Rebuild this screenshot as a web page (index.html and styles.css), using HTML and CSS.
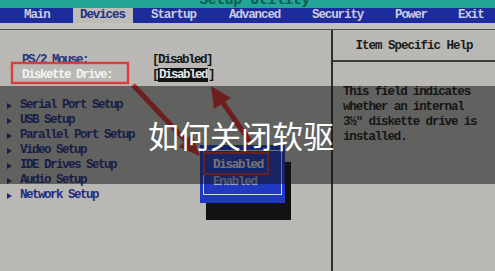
FILE: index.html
```html
<!DOCTYPE html>
<html lang="zh-CN">
<head>
<meta charset="utf-8">
<title>如何关闭软驱</title>
<link rel="stylesheet" href="styles.css">
</head>
<body>
<div class="screen">
  <div class="title"><span>Setup Utility</span></div>
  <nav class="menubar">
    <span class="m first">Main</span>
    <span class="m tab">Devices</span>
    <span class="m">Startup</span>
    <span class="m">Advanced</span>
    <span class="m">Security</span>
    <span class="m">Power</span>
    <span class="m">Exit</span>
  </nav>
  <div class="strip"></div>
  <main class="frame">
    <section class="left">
      <div class="row"><span class="lbl">PS/2 Mouse:</span><span class="val">[Disabled]</span></div>
      <div class="row"><span class="lbl sel">Diskette Drive:</span><span class="val">[<b class="hl">Disabled</b>]</span></div>
      <div class="blank"></div>
      <ul class="subs">
        <li><i class="tri"></i>Serial Port Setup</li>
        <li><i class="tri"></i>USB Setup</li>
        <li><i class="tri"></i>Parallel Port Setup</li>
        <li><i class="tri"></i>Video Setup</li>
        <li><i class="tri"></i>IDE Drives Setup</li>
        <li><i class="tri"></i>Audio Setup</li>
        <li><i class="tri"></i>Network Setup</li>
      </ul>
    </section>
    <aside class="help">
      <h2>Item Specific Help</h2>
      <p>This field indicates<br>whether an internal<br>3½" diskette drive is<br>installed.</p>
    </aside>
  </main>
</div>
<div class="popup">
  <div class="popup-inner">
    <div class="opt chosen">Disabled</div>
    <div class="opt">Enabled</div>
  </div>
</div>
<svg class="marks" width="495" height="271" viewBox="0 0 495 271">
  <rect x="12" y="63" width="116" height="20" fill="none" stroke="#de3c3a" stroke-width="2.4"/>
  <line x1="133" y1="85" x2="188" y2="143" stroke="#d02e2c" stroke-width="5"/>
  <polygon points="200,156 179,147 192,134" fill="#d02e2c"/>
  <line x1="251" y1="143" x2="221" y2="100" stroke="#d02e2c" stroke-width="5"/>
  <polygon points="211,86 214,109 231,98" fill="#d02e2c"/>
</svg>
<div class="band"></div>
<div class="caption">如何关闭软驱</div>
</body>
</html>
```
FILE: styles.css
```css
html, body {
  margin: 0;
  padding: 0;
}
body {
  width: 495px;
  height: 271px;
  overflow: hidden;
  position: relative;
  background: #b9b8b4;
  font-family: "Liberation Mono", "DejaVu Sans Mono", monospace;
  font-weight: bold;
}
.screen {
  display: flex;
  flex-direction: column;
  height: 271px;
}
.title {
  height: 8px;
  overflow: hidden;
  background: #22a596;
  text-align: center;
  padding-left: 14px;
}
.title span {
  display: block;
  margin-top: -7px;
  font-size: 15px;
  line-height: 15px;
  color: #0b5e50;
  letter-spacing: -0.5px;
}
.menubar {
  display: grid;
  grid-template-columns: 73px 60px 78px 83px 83px 63px 1fr;
  height: 15px;
  background: #1c2c9c;
  font-size: 12.5px;
  line-height: 15px;
  letter-spacing: -1.1px;
  color: #c9cde2;
}
.m {
  padding-left: 18px;
  white-space: nowrap;
}
.m.first {
  padding-left: 24px;
}
.m.tab {
  padding-left: 7px;
  background: #bcbbb8;
  color: #24307e;
}
.strip {
  height: 6px;
  background: #c2c1bd;
  border-bottom: 1px solid #4e4e4c;
}
.frame {
  flex: 1;
  display: grid;
  grid-template-columns: 333px 1fr;
  font-size: 12.5px;
  line-height: 15px;
  letter-spacing: -1.5px;
}
.left {
  border-right: 2px solid #2e2e2e;
  padding-top: 23px;
}
.row {
  display: flex;
  height: 15px;
  padding-left: 22px;
}
.lbl {
  width: 130px;
  color: #27337c;
}
.lbl.sel {
  color: #f4f4f2;
}
.val {
  color: #161616;
}
.hl {
  background: #121212;
  color: #e6e6e6;
  padding: 0 1px;
}
.blank {
  height: 15px;
}
.subs {
  list-style: none;
  margin: 0;
  padding: 0 0 0 7px;
  color: #1f2b80;
}
.subs li {
  display: flex;
  align-items: center;
  height: 15px;
}
.tri {
  width: 0;
  height: 0;
  border-left: 5px solid #1f2b80;
  border-top: 3.5px solid transparent;
  border-bottom: 3.5px solid transparent;
  margin-right: 8px;
}
.help h2 {
  margin: 0;
  height: 30px;
  line-height: 32px;
  font-size: 12.5px;
  letter-spacing: -1px;
  text-align: center;
  color: #1a1a1a;
  border-bottom: 2px solid #3c3c3a;
}
.help p {
  margin: 23px 0 0;
  padding-left: 10px;
  color: #1c1c1c;
  letter-spacing: -1.15px;
  white-space: nowrap;
}
.popup {
  position: absolute;
  left: 200px;
  top: 145px;
  width: 85px;
  height: 58px;
  box-sizing: border-box;
  padding: 5px 3px 8px 3px;
  background: #2139c0;
  box-shadow: 6px 17px 0 #111111;
  font-size: 12.5px;
  letter-spacing: -1.25px;
}
.popup-inner {
  height: 100%;
  box-sizing: border-box;
  border: 1px solid #d4d8f4;
  padding-top: 1px;
}
.opt {
  height: 14px;
  line-height: 15px;
  padding-left: 9px;
  color: #a8acc8;
}
.opt.chosen {
  width: 66px;
  height: 23px;
  line-height: 22px;
  box-sizing: border-box;
  margin-left: -1px;
  border: 2px solid #c43232;
  padding-left: 8px;
  color: #e2e2e4;
}
.marks {
  position: absolute;
  left: 0;
  top: 0;
}
.band {
  position: absolute;
  left: 0;
  right: 0;
  top: 86px;
  height: 98px;
  background: rgba(18, 18, 18, 0.52);
}
.caption {
  position: absolute;
  left: 148px;
  top: 119px;
  font-family: "Noto Sans CJK SC", "Noto Sans", sans-serif;
  font-weight: 400;
  font-size: 31px;
  line-height: 31px;
  color: #ffffff;
  white-space: nowrap;
}
```
